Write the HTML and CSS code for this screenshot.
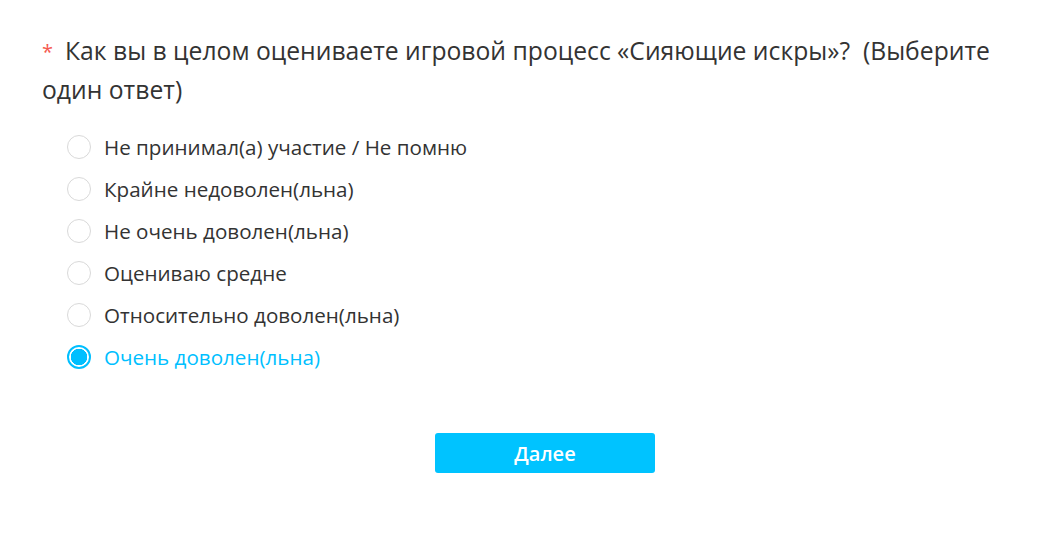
FILE: index.html
```html
<!DOCTYPE html>
<html lang="ru">
<head>
<meta charset="utf-8">
<link rel="stylesheet" href="styles.css">
</head>
<body>
<div class="survey">
  <div class="question">
    <span class="req">*</span><span class="qtext">Как вы в целом оцениваете игровой процесс «Сияющие искры»?&nbsp; (Выберите один ответ)</span>
  </div>
  <ul class="options">
    <li class="option"><span class="radio"></span><span class="label">Не принимал(а) участие / Не помню</span></li>
    <li class="option"><span class="radio"></span><span class="label">Крайне недоволен(льна)</span></li>
    <li class="option"><span class="radio"></span><span class="label">Не очень доволен(льна)</span></li>
    <li class="option"><span class="radio"></span><span class="label">Оцениваю средне</span></li>
    <li class="option"><span class="radio"></span><span class="label">Относительно доволен(льна)</span></li>
    <li class="option selected"><span class="radio"></span><span class="label">Очень доволен(льна)</span></li>
  </ul>
  <div class="actions">
    <button class="next">Далее</button>
  </div>
</div>
</body>
</html>
```

FILE: styles.css
```css
html, body {
  margin: 0;
  padding: 0;
  background: #fff;
}
body {
  font-family: "Open Sans", "Noto Sans", sans-serif;
  color: #333;
}
.survey {
  padding: 32px 0 0 42px;
}
.question {
  font-size: 24.7px;
  line-height: 38px;
  color: #333;
  padding-right: 30px;
}
.req {
  color: #f5594f;
  font-size: 20px;
  margin-right: 12px;
  vertical-align: 1px;
}
.options {
  list-style: none;
  margin: 17px 0 0 0;
  padding: 0 0 0 25px;
}
.option {
  display: flex;
  align-items: center;
  height: 42px;
  font-size: 20.6px;
  color: #333;
}
.radio {
  box-sizing: border-box;
  width: 24px;
  height: 24px;
  border: 1px solid #d9d9d9;
  border-radius: 50%;
  margin-right: 13px;
  flex: none;
}
.option.selected {
  color: #00bfff;
}
.option.selected .radio {
  border: 2px solid #00bfff;
  background: radial-gradient(circle, #00bfff 0 8px, #fff 8.5px);
}
.actions {
  display: flex;
  justify-content: center;
  margin-top: 55px;
}
.next {
  width: 220px;
  height: 40px;
  border: none;
  border-radius: 3px;
  background: #00c3ff;
  color: #fff;
  font-family: "Open Sans", "Noto Sans", sans-serif;
  font-size: 20px;
  font-weight: 600;
  cursor: pointer;
}
```
